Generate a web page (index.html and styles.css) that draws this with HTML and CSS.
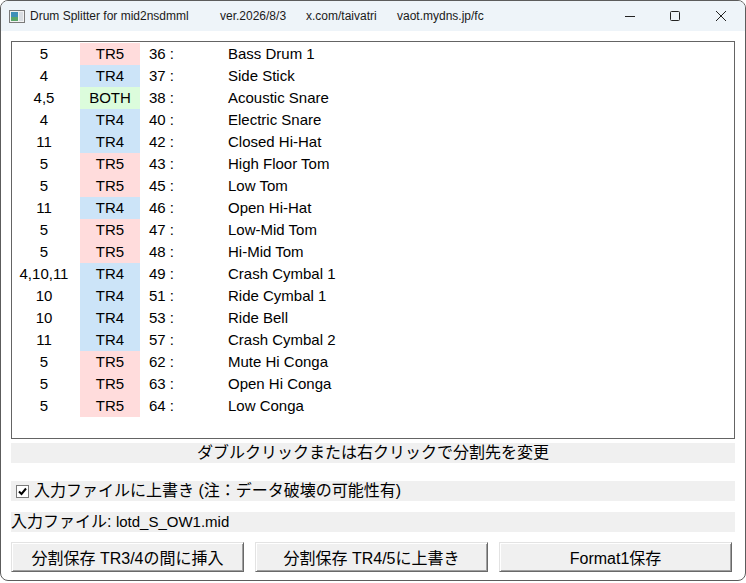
FILE: index.html
```html
<!DOCTYPE html>
<html lang="ja">
<head>
  <meta charset="UTF-8">
  <title>Drum Splitter for mid2nsdmml</title>
  <link rel="stylesheet" href="styles.css">
</head>
<body>
  <div class="window">
    <div class="titlebar">
      <svg class="app-icon" width="16" height="13" viewBox="0 0 16 13">
        <rect x="0.5" y="0.5" width="15" height="12" fill="#f2f2f2" stroke="#7a7a7a"/>
        <rect x="2" y="2" width="7" height="9" fill="#3f8fb8"/>
        <rect x="2" y="7" width="7" height="4" fill="#5aa56a"/>
        <rect x="10" y="2" width="4" height="9" fill="#d9dde2"/>
      </svg>
      <span class="t1">Drum Splitter for mid2nsdmml</span>
      <span class="t2">ver.2026/8/3</span>
      <span class="t3">x.com/taivatri</span>
      <span class="t4">vaot.mydns.jp/fc</span>
      <div class="win-buttons">
        <span class="wb"><svg width="10" height="10" viewBox="0 0 10 10"><path d="M0 5.5H10" stroke="#222" stroke-width="1"/></svg></span>
        <span class="wb"><svg width="10" height="10" viewBox="0 0 10 10"><rect x="0.5" y="0.5" width="9" height="9" rx="1" fill="none" stroke="#222"/></svg></span>
        <span class="wb"><svg width="10" height="10" viewBox="0 0 10 10"><path d="M0 0L10 10M10 0L0 10" stroke="#222" stroke-width="1"/></svg></span>
      </div>
    </div>

    <div class="client">
      <div class="listbox">
        <div class="row"><span class="trk">5</span><span class="dst tr5">TR5</span><span class="note">36 :</span><span class="name">Bass Drum 1</span></div>
        <div class="row"><span class="trk">4</span><span class="dst tr4">TR4</span><span class="note">37 :</span><span class="name">Side Stick</span></div>
        <div class="row"><span class="trk">4,5</span><span class="dst both">BOTH</span><span class="note">38 :</span><span class="name">Acoustic Snare</span></div>
        <div class="row"><span class="trk">4</span><span class="dst tr4">TR4</span><span class="note">40 :</span><span class="name">Electric Snare</span></div>
        <div class="row"><span class="trk">11</span><span class="dst tr4">TR4</span><span class="note">42 :</span><span class="name">Closed Hi-Hat</span></div>
        <div class="row"><span class="trk">5</span><span class="dst tr5">TR5</span><span class="note">43 :</span><span class="name">High Floor Tom</span></div>
        <div class="row"><span class="trk">5</span><span class="dst tr5">TR5</span><span class="note">45 :</span><span class="name">Low Tom</span></div>
        <div class="row"><span class="trk">11</span><span class="dst tr4">TR4</span><span class="note">46 :</span><span class="name">Open Hi-Hat</span></div>
        <div class="row"><span class="trk">5</span><span class="dst tr5">TR5</span><span class="note">47 :</span><span class="name">Low-Mid Tom</span></div>
        <div class="row"><span class="trk">5</span><span class="dst tr5">TR5</span><span class="note">48 :</span><span class="name">Hi-Mid Tom</span></div>
        <div class="row"><span class="trk">4,10,11</span><span class="dst tr4">TR4</span><span class="note">49 :</span><span class="name">Crash Cymbal 1</span></div>
        <div class="row"><span class="trk">10</span><span class="dst tr4">TR4</span><span class="note">51 :</span><span class="name">Ride Cymbal 1</span></div>
        <div class="row"><span class="trk">10</span><span class="dst tr4">TR4</span><span class="note">53 :</span><span class="name">Ride Bell</span></div>
        <div class="row"><span class="trk">11</span><span class="dst tr4">TR4</span><span class="note">57 :</span><span class="name">Crash Cymbal 2</span></div>
        <div class="row"><span class="trk">5</span><span class="dst tr5">TR5</span><span class="note">62 :</span><span class="name">Mute Hi Conga</span></div>
        <div class="row"><span class="trk">5</span><span class="dst tr5">TR5</span><span class="note">63 :</span><span class="name">Open Hi Conga</span></div>
        <div class="row"><span class="trk">5</span><span class="dst tr5">TR5</span><span class="note">64 :</span><span class="name">Low Conga</span></div>
      </div>

      <div class="bar hint">ダブルクリックまたは右クリックで分割先を変更</div>

      <div class="bar check-bar">
        <span class="checkbox"><svg width="9" height="9" viewBox="0 0 9 9"><path d="M1 4.5L3.5 7L8 1.5" fill="none" stroke="#000" stroke-width="2"/></svg></span>
        <span>入力ファイルに上書き (注：データ破壊の可能性有)</span>
      </div>

      <div class="bar file-bar">入力ファイル: <span class="fname">lotd_S_OW1.mid</span></div>

      <div class="buttons">
        <button class="btn">分割保存 TR3/4の間に挿入</button>
        <button class="btn">分割保存 TR4/5に上書き</button>
        <button class="btn">Format1保存</button>
      </div>
    </div>
  </div>
</body>
</html>
```

FILE: styles.css
```css
body {
  margin: 0;
  background: #fff;
  font-family: "Liberation Sans", "Noto Sans CJK JP", sans-serif;
}
.window {
  width: 746px;
  height: 581px;
  box-sizing: border-box;
  border: 1px solid #5c5c5c;
  border-radius: 8px;
  overflow: hidden;
  background: #fff;
}
.titlebar {
  height: 30px;
  background: #eef4f9;
  display: flex;
  align-items: center;
  font-size: 12px;
  color: #1a1a1a;
  white-space: nowrap;
}
.app-icon {
  margin-left: 8px;
  margin-right: 5px;
  flex: none;
}
.t1 { width: 190px; }
.t2 { width: 86px; }
.t3 { width: 91px; }
.t4 { flex: 1; }
.win-buttons {
  display: flex;
  height: 100%;
}
.wb {
  width: 45px;
  display: flex;
  align-items: center;
  justify-content: center;
}
.wb:last-child {
  width: 48px;
}
.client {
  padding: 10px 10px 0 10px;
}
.listbox {
  height: 398px;
  box-sizing: border-box;
  border: 1px solid #646464;
  padding-top: 1px;
  font-size: 15px;
}
.row {
  display: flex;
  height: 22px;
  line-height: 21px;
  white-space: nowrap;
}
.trk {
  width: 64px;
  text-align: center;
}
.dst {
  width: 60px;
  margin-left: 4px;
  text-align: center;
}
.tr5 { background: #ffdcdc; }
.tr4 { background: #cce4f8; }
.both { background: #dcfcdc; }
.note {
  width: 79px;
  padding-left: 9px;
}
.bar {
  height: 20px;
  line-height: 20px;
  background: #f0f0f0;
  font-size: 16px;
  white-space: nowrap;
}
.hint {
  margin-top: 4px;
  text-align: center;
}
.check-bar {
  margin-top: 18px;
  display: flex;
  align-items: center;
}
.checkbox {
  width: 11px;
  height: 11px;
  margin: 0 5px 0 5px;
  border: 1px solid #7a7a7a;
  background: #fff;
  display: flex;
  align-items: center;
  justify-content: center;
}
.file-bar {
  margin-top: 11px;
}
.fname {
  font-size: 15px;
}
.buttons {
  margin-top: 10px;
  display: flex;
  gap: 11px;
}
.btn {
  width: 233px;
  height: 30px;
  background: #f0f0f0;
  border: 1px solid;
  border-color: #e3e3e3 #696969 #696969 #e3e3e3;
  box-shadow: inset 1px 1px #fff, inset -1px -1px #a0a0a0;
  font-family: "Liberation Sans", "Noto Sans CJK JP", sans-serif;
  font-size: 16px;
  color: #000;
  padding: 0;
}
```
